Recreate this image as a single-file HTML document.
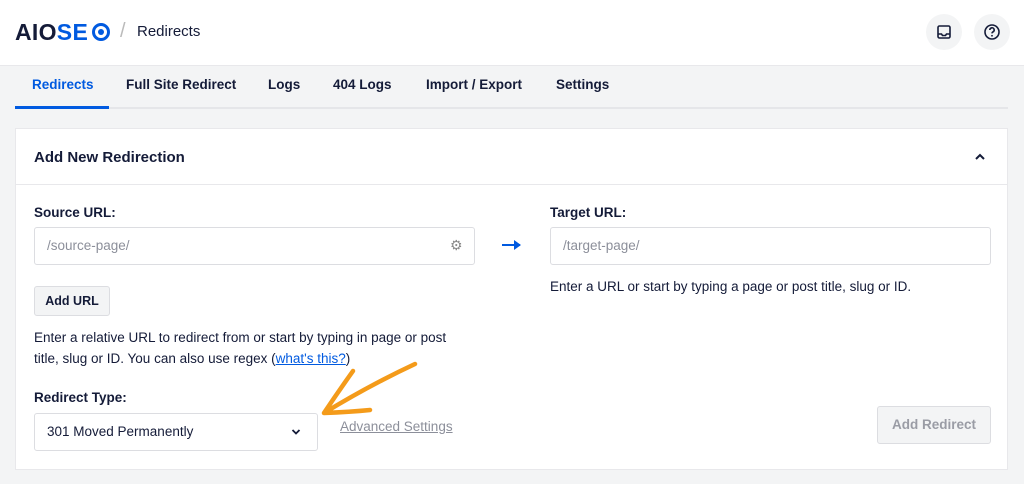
<!DOCTYPE html>
<html><head><style>
*{box-sizing:border-box;margin:0;padding:0}
body{width:1024px;height:484px;background:#f3f4f5;font-family:"Liberation Sans",sans-serif;color:#141b38;position:relative;overflow:hidden}
.hdr{position:absolute;left:0;top:0;width:1024px;height:66px;background:#fff;border-bottom:1px solid #e8e8eb}
.abs{position:absolute}
.tab{position:absolute;top:77px;font-size:13.5px;font-weight:bold;color:#141b38}
.card{position:absolute;left:15px;top:128px;width:993px;height:342px;background:#fff;border:1px solid #e8e8eb}
.lbl{position:absolute;font-size:13.5px;font-weight:bold}
.inp{position:absolute;border:1px solid #dcdde1;border-radius:3px;background:#fff;font-size:13.5px;color:#8c8f9a;padding-left:12px;line-height:36px}
.txt{position:absolute;font-size:13.5px;line-height:21px;color:#141b38}
.btn{position:absolute;border:1px solid #dcdde1;border-radius:3px;background:#f3f4f5;font-size:12.5px;font-weight:bold;text-align:center}
.circ{position:absolute;top:14px;width:36px;height:36px;border-radius:50%;background:#f3f4f5}
</style></head><body>
<div class="hdr">
<div class="abs" style="left:15px;top:19px;font-size:23px;font-weight:bold;letter-spacing:0.3px;color:#141b38">AIO<span style="color:#005ae0">SE</span></div>
<svg class="abs" style="left:91px;top:22px" width="20" height="20" viewBox="0 0 20 20"><circle cx="10" cy="10" r="7.5" fill="none" stroke="#005ae0" stroke-width="3"/><circle cx="10" cy="10" r="3" fill="#005ae0"/></svg>
<div class="abs" style="left:120px;top:20px;font-size:20px;color:#bbb">/</div>
<div class="abs" style="left:137px;top:23px;font-size:15px;color:#141b38">Redirects</div>
<div class="circ" style="left:926px"><svg style="position:absolute;left:10px;top:10px" width="16" height="16" viewBox="0 0 16 16"><rect x="2" y="2" width="12" height="12" rx="1.5" fill="none" stroke="#141b38" stroke-width="1.6"/><path d="M2 10h3.5l1 1.5h3l1-1.5H14" fill="none" stroke="#141b38" stroke-width="1.6"/></svg></div>
<div class="circ" style="left:974px"><svg style="position:absolute;left:9px;top:9px" width="18" height="18" viewBox="0 0 18 18"><circle cx="9" cy="9" r="7" fill="none" stroke="#141b38" stroke-width="1.6"/><path d="M6.8 7a2.2 2.2 0 1 1 3 2c-.6.3-.8.7-.8 1.4" fill="none" stroke="#141b38" stroke-width="1.6"/><circle cx="9" cy="12.8" r=".9" fill="#141b38"/></svg></div>
</div>
<div class="abs" style="left:15px;top:107px;width:993px;height:2px;background:#e5e6e9"></div>
<div class="tab" style="left:32px;color:#005ae0">Redirects</div>
<div class="abs" style="left:15px;top:106px;width:94px;height:3px;background:#005ae0"></div>
<div class="tab" style="left:126px">Full Site Redirect</div>
<div class="tab" style="left:268px">Logs</div>
<div class="tab" style="left:333px">404 Logs</div>
<div class="tab" style="left:426px">Import / Export</div>
<div class="tab" style="left:556px">Settings</div>
<div class="card">
<div class="abs" style="left:0;top:0;width:991px;height:56px;border-bottom:1px solid #e8e8eb"></div>
<div class="abs" style="left:18px;top:20px;font-size:15px;font-weight:bold">Add New Redirection</div>
<svg class="abs" style="left:958px;top:23px" width="12" height="10" viewBox="0 0 12 10"><path d="M2 7l4-4 4 4" fill="none" stroke="#141b38" stroke-width="2"/></svg>
</div>
<div class="lbl" style="left:34px;top:205px">Source URL:</div>
<div class="inp" style="left:34px;top:227px;width:441px;height:38px">/source-page/</div>
<div class="abs" style="left:450px;top:237px;font-size:14px;color:#888">⚙</div>
<div class="abs" style="left:502px;top:244px;width:18px;height:2px;background:#005ae0"></div>
<svg class="abs" style="left:514px;top:240px" width="8" height="10" viewBox="0 0 8 10"><path d="M0 0l7 5-7 5z" fill="#005ae0"/></svg>
<div class="lbl" style="left:550px;top:205px">Target URL:</div>
<div class="inp" style="left:550px;top:227px;width:441px;height:38px">/target-page/</div>
<div class="txt" style="left:550px;top:276px">Enter a URL or start by typing a page or post title, slug or ID.</div>
<div class="btn" style="left:34px;top:286px;width:76px;height:30px;line-height:28px">Add URL</div>
<div class="txt" style="left:34px;top:327px;width:440px">Enter a relative URL to redirect from or start by typing in page or post title, slug or ID. You can also use regex (<span style="color:#005ae0;text-decoration:underline">what's this?</span>)</div>
<div class="lbl" style="left:34px;top:390px">Redirect Type:</div>
<div class="inp" style="left:34px;top:413px;width:284px;height:38px;color:#141b38">301 Moved Permanently</div>
<svg class="abs" style="left:291px;top:428px" width="10" height="8" viewBox="0 0 10 8"><path d="M1.5 2l3.5 3.5L8.5 2" fill="none" stroke="#141b38" stroke-width="1.8"/></svg>
<div class="abs" style="left:340px;top:419px;font-size:13.5px;color:#8c8f9a;text-decoration:underline">Advanced Settings</div>
<div class="btn" style="left:877px;top:406px;width:114px;height:38px;line-height:36px;color:#9a9ca5;font-size:13.5px">Add Redirect</div>
<svg class="abs" style="left:0;top:0" width="1024" height="484"><path d="M415 364 Q370 385 324 413 M353 371 Q338 392 324 413 Q350 412 370 410" fill="none" stroke="#f49b1a" stroke-width="4.5" stroke-linecap="round" stroke-linejoin="round"/></svg>
</body></html>
